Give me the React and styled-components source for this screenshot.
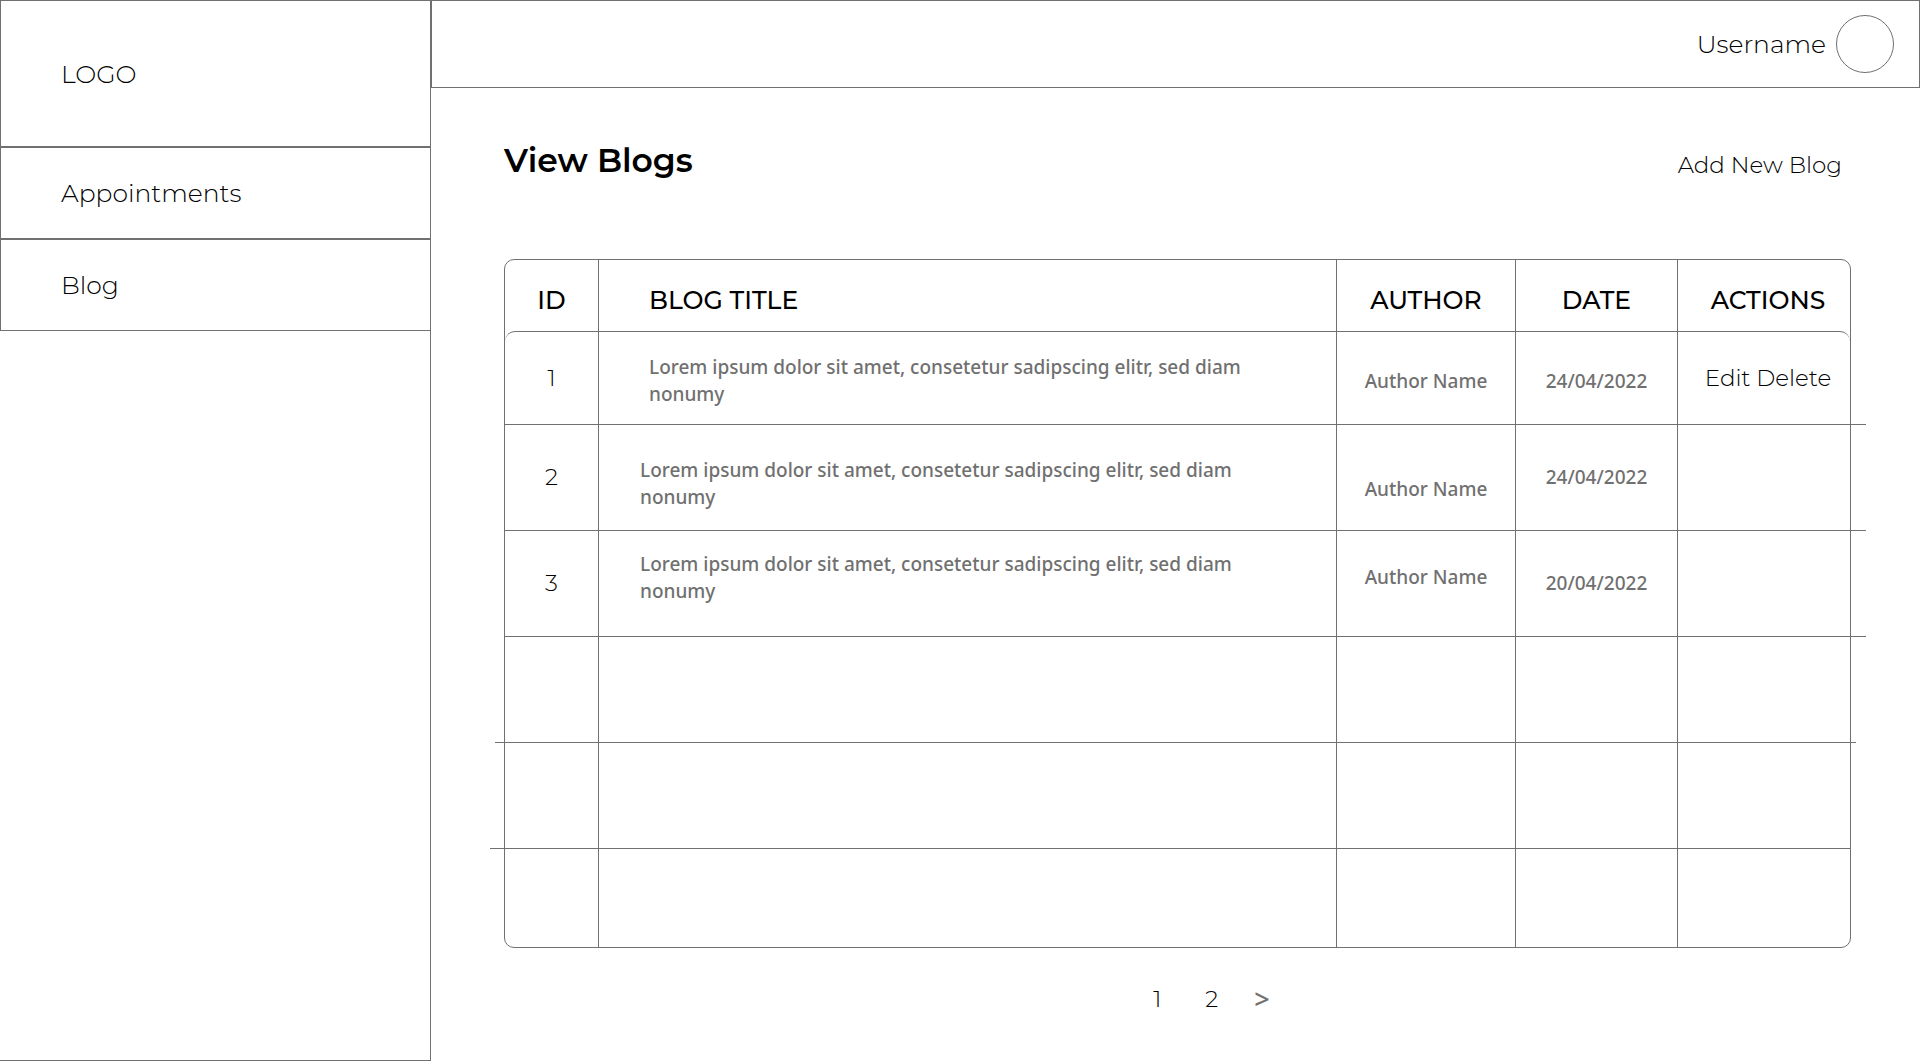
import React from "react";
import styled, { createGlobalStyle, css } from "styled-components";

const LINE = "#707070";
const DISPLAY = `"Montserrat", "Inter", "Liberation Sans", sans-serif`;
const BODY = `"Noto Sans", "Open Sans", "Liberation Sans", sans-serif`;

const GlobalStyle = createGlobalStyle`
  *, *::before, *::after { box-sizing: border-box; }
  body {
    margin: 0;
    background: #fff;
    color: #000;
    font-family: ${DISPLAY};
    font-weight: 300;
  }
  a { color: inherit; text-decoration: none; }
`;

const Page = styled.div`
  display: grid;
  grid-template-columns: 431px 1fr;
  min-height: 100vh;
`;

const Sidebar = styled.aside`
  border-right: 1px solid ${LINE};
  border-bottom: 1px solid ${LINE};
`;

const boxed = css`
  display: flex;
  align-items: center;
  padding-left: 60px;
  border: 1px solid ${LINE};
  border-right: 0;
  font-size: 25px;
  line-height: 30px;
`;

const Logo = styled.div`
  ${boxed}
  height: 147px;
`;

const NavLink = styled.a`
  ${boxed}
  height: 92px;
`;

const Content = styled.div`
  display: flex;
  flex-direction: column;
  min-width: 0;
`;

const TopBar = styled.header`
  display: flex;
  align-items: center;
  justify-content: flex-end;
  gap: 10px;
  height: 88px;
  padding-right: 25px;
  border: 1px solid ${LINE};
  font-size: 25px;
  line-height: 30px;
`;

const Avatar = styled.span`
  width: 58px;
  height: 58px;
  border: 1px solid ${LINE};
  border-radius: 50%;
`;

const Main = styled.main`
  padding: 52px 69px 32px 73px;
`;

const Heading = styled.div`
  display: flex;
  align-items: flex-end;
  justify-content: space-between;
  margin-bottom: 79px;
  padding-right: 9px;
`;

const Title = styled.h1`
  margin: 0;
  font-size: 33px;
  font-weight: 600;
  line-height: 40px;
`;

const AddLink = styled.a`
  font-size: 23px;
  line-height: 30px;
`;

const Table = styled.table`
  width: 100%;
  table-layout: fixed;
  border: 1px solid ${LINE};
  border-radius: 10px;
  border-collapse: separate;
  border-spacing: 0;
`;

const Col = styled.col`
  width: ${(p) => (p.$width ? `${p.$width}px` : "auto")};
`;

const HeadCell = styled.th`
  height: 71px;
  padding: 8px 0 0 ${(p) => p.$indent || 0}px;
  border-right: 1px solid ${LINE};
  font-size: 25px;
  font-weight: 500;
  line-height: 30px;
  text-align: ${(p) => (p.$left ? "left" : "center")};
  &:last-child { border-right: 0; }
`;

const Cell = styled.td`
  height: 106px;
  padding: ${(p) => p.$drop || 0}px 0 ${(p) => p.$lift || 0}px ${(p) => p.$indent || 0}px;
  border-right: 1px solid ${LINE};
  border-bottom: 1px solid ${LINE};
  color: ${LINE};
  font-family: ${BODY};
  font-size: 19px;
  font-weight: 500;
  line-height: 27px;
  text-align: center;
  vertical-align: middle;
  &:last-child { border-right: 0; }
`;

const IdCell = styled(Cell)`
  color: #000;
  font-family: ${DISPLAY};
  font-size: 23px;
  font-weight: 300;
`;

const TitleCell = styled(Cell)`
  text-align: left;
`;

const BlogTitle = styled.div`
  max-width: 620px;
`;

const Row = styled.tr`
  &:first-child > td {
    height: 94px;
    border-top: 1px solid ${LINE};
  }
  &:first-child > td:first-child { border-top-left-radius: 10px; }
  &:first-child > td:last-child { border-top-right-radius: 10px; }
  &:last-child > td {
    height: 98px;
    border-bottom: 0;
  }

  /* row rules run past the frame on one or both sides */
  > td:first-child, > td:last-child { position: relative; }
  > td:first-child::before, > td:last-child::after {
    content: "";
    position: absolute;
    bottom: -1px;
    height: 1px;
    background: ${LINE};
  }
  > td:first-child::before {
    right: 100%;
    width: ${(p) => p.$before || 0}px;
  }
  > td:last-child::after {
    left: 100%;
    width: ${(p) => p.$after || 0}px;
  }
`;

const Actions = styled.div`
  display: flex;
  justify-content: center;
  gap: 6px;
`;

const ActionButton = styled.button`
  padding: 0;
  border: 0;
  background: none;
  color: #000;
  font-family: ${DISPLAY};
  font-size: 23px;
  font-weight: 300;
  line-height: 28px;
  cursor: pointer;
`;

const Pagination = styled.nav`
  display: flex;
  justify-content: center;
  gap: 44px;
  margin-top: 37px;
  padding-left: 68px;
  font-size: 23px;
  line-height: 28px;
`;

const NextLink = styled.a`
  margin-left: -8px;
  color: ${LINE};
  font-family: ${BODY};
  font-size: 27px;
  font-weight: 500;
`;

const TITLE = "Lorem ipsum dolor sit amet, consetetur sadipscing elitr, sed diam nonumy";

const ROWS = [
  {
    id: 1, title: TITLE, author: "Author Name", date: "24/04/2022", editable: true,
    after: 16, indent: 50,
    titlePad: { $drop: 6 }, authorPad: { $drop: 6 }, datePad: { $drop: 6 },
  },
  {
    id: 2, title: TITLE, author: "Author Name", date: "24/04/2022",
    after: 16, indent: 41,
    titlePad: { $drop: 12 }, authorPad: { $drop: 24 },
  },
  {
    id: 3, title: TITLE, author: "Author Name", date: "20/04/2022",
    after: 16, indent: 41,
    titlePad: { $lift: 12 }, authorPad: { $lift: 12 },
  },
  { before: 10, after: 6 },
  { before: 15 },
  {},
];

export default function App() {
  return (
    <>
      <GlobalStyle />
      <Page>
        <Sidebar>
          <Logo>LOGO</Logo>
          <nav>
            <NavLink href="#appointments">Appointments</NavLink>
            <NavLink href="#blog">Blog</NavLink>
          </nav>
        </Sidebar>
        <Content>
          <TopBar>
            <span>Username</span>
            <Avatar />
          </TopBar>
          <Main>
            <Heading>
              <Title>View Blogs</Title>
              <AddLink href="#new">Add New Blog</AddLink>
            </Heading>
            <Table>
              <colgroup>
                <Col $width={94} />
                <Col />
                <Col $width={179} />
                <Col $width={162} />
                <Col $width={172} />
              </colgroup>
              <thead>
                <tr>
                  <HeadCell>ID</HeadCell>
                  <HeadCell $left $indent={50}>BLOG TITLE</HeadCell>
                  <HeadCell>AUTHOR</HeadCell>
                  <HeadCell>DATE</HeadCell>
                  <HeadCell $indent={8}>ACTIONS</HeadCell>
                </tr>
              </thead>
              <tbody>
                {ROWS.map((r, i) => (
                  <Row key={i} $before={r.before} $after={r.after}>
                    <IdCell>{r.id}</IdCell>
                    <TitleCell $indent={r.indent} {...r.titlePad}>
                      {r.title && <BlogTitle>{r.title}</BlogTitle>}
                    </TitleCell>
                    <Cell {...r.authorPad}>{r.author}</Cell>
                    <Cell {...r.datePad}>{r.date}</Cell>
                    <Cell $indent={8}>
                      {r.editable && (
                        <Actions>
                          <ActionButton type="button">Edit</ActionButton>
                          <ActionButton type="button">Delete</ActionButton>
                        </Actions>
                      )}
                    </Cell>
                  </Row>
                ))}
              </tbody>
            </Table>
            <Pagination aria-label="Pages">
              <a href="#page-1">1</a>
              <a href="#page-2">2</a>
              <NextLink href="#next">&gt;</NextLink>
            </Pagination>
          </Main>
        </Content>
      </Page>
    </>
  );
}
